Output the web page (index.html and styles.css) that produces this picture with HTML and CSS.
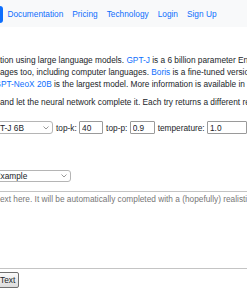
FILE: index.html
```html
<!DOCTYPE html>
<html lang="en">
<head>
    <meta charset="UTF-8">
    <meta name="viewport" content="width=device-width, initial-scale=1.0">
    <title>TextSynth Playground</title>
    <link rel="stylesheet" href="styles.css">
</head>
<body>
    <nav class="navbar">
        <a href="#" class="active">Playground</a>
        <a href="#">Documentation</a>
        <a href="#">Pricing</a>
        <a href="#">Technology</a>
        <a href="#">Login</a>
        <a href="#">Sign Up</a>
    </nav>
    <main class="content">
        <p class="intro">
            <span class="line">tion using large language models. <a href="#">GPT-J</a> is a 6 billion parameter English language model</span>
            <span class="line">ages too, including computer languages. <a href="#">Boris</a> is a fine-tuned version of GPT-J for French.</span>
            <span class="line cut"><a href="#">GPT-NeoX 20B</a> is the largest model. More information is available in the documentation.</span>
        </p>
        <p class="line">and let the neural network complete it. Each try returns a different result.</p>
        <form id="completeForm">
            <div class="params">
                <select id="model" class="model">
                    <option>GPT-J 6B</option>
                    <option>Boris 6B</option>
                    <option>GPT-NeoX 20B</option>
                </select>
                <label>top-k: <input type="text" id="topK" value="40" class="num"></label>
                <label>top-p: <input type="text" id="topP" value="0.9" class="num"></label>
                <label>temperature: <input type="text" id="temp" value="1.0" class="num"></label>
            </div>
            <select id="example" class="example">
                <option>Example</option>
            </select>
            <textarea id="prompt" class="prompt" placeholder="ext here. It will be automatically completed with a (hopefully) realistic continuation."></textarea>
            <button type="button" class="submit">Text</button>
        </form>
    </main>
</body>
</html>
```

FILE: styles.css
```css
body {
    margin: 0;
    font-family: "Liberation Sans", Arial, sans-serif;
    font-size: 8.3px;
    line-height: 12px;
    color: #212529;
    background-color: #fff;
    overflow: hidden;
}
a {
    color: #0d6efd;
    text-decoration: none;
}
.navbar {
    display: flex;
    align-items: center;
    height: 27px;
    background-color: #f8f9fa;
    white-space: nowrap;
}
.navbar a {
    padding: 0 4.5px;
}
.navbar a.active {
    flex: none;
    box-sizing: border-box;
    width: 52px;
    height: 17px;
    margin-left: -49px;
    margin-top: 2px;
    line-height: 17px;
    background-color: #0d6efd;
    color: #fff;
    border-radius: 3px;
    overflow: hidden;
}
.content {
    padding-top: 27px;
}
p {
    margin: 0 0 6px;
}
.line {
    display: block;
    white-space: nowrap;
}
.cut {
    text-indent: -5.5px;
}
.params {
    display: flex;
    align-items: center;
    gap: 3px;
    margin-top: 13px;
    white-space: nowrap;
}
select, input, textarea, button {
    font-family: "Liberation Sans", Arial, sans-serif;
    font-size: 8.3px;
    color: #212529;
}
select {
    -webkit-appearance: none;
    appearance: none;
    box-sizing: border-box;
    height: 12px;
    padding: 0 0 0 2px;
    border: 1px solid #b5b5b5;
    border-radius: 3px;
    background: #fff url("data:image/svg+xml,%3Csvg xmlns='http://www.w3.org/2000/svg' width='6' height='4'%3E%3Cpath d='M.5.5 3 3 5.5.5' fill='none' stroke='%23999'/%3E%3C/svg%3E") no-repeat right 3px center;
    line-height: 10px;
}
.model {
    width: 84px;
    height: 13px;
    margin-left: -15px;
}
.num {
    box-sizing: border-box;
    width: 24px;
    height: 13px;
    padding: 0 2px;
    border: 1px solid #9a9a9a;
    border-radius: 1px;
}
#topP {
    width: 25px;
}
#temp {
    width: 40px;
}
.example {
    display: block;
    width: 79px;
    margin: 36px 0 0 -8px;
}
.prompt {
    display: block;
    box-sizing: border-box;
    width: 600px;
    height: 78px;
    margin: 9px 0 0 -4px;
    padding: 1px 3px;
    border: 1px solid #c4c4c4;
    line-height: 12px;
    resize: none;
}
.prompt::placeholder {
    color: #777;
}
.submit {
    display: block;
    box-sizing: border-box;
    height: 16px;
    margin: 3px 0 0 -4px;
    padding: 0 3px;
    border: 1px solid #707070;
    border-radius: 2px;
    background: linear-gradient(#fafafa, #dcdcdc);
}
```
